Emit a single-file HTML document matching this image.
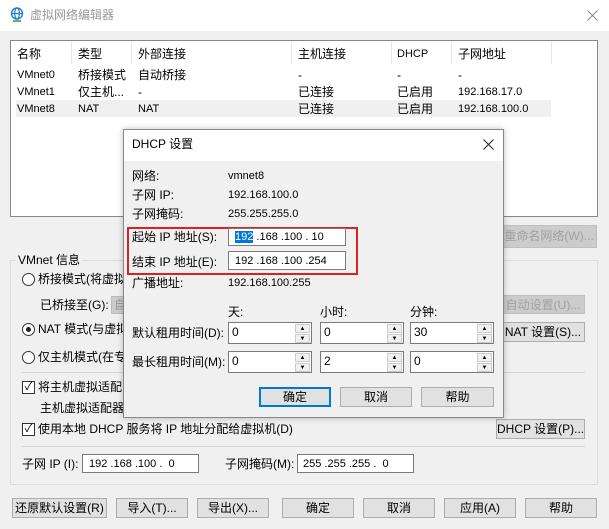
<!DOCTYPE html><html><head><meta charset="utf-8"><style>
*{margin:0;padding:0;box-sizing:border-box}
body{width:609px;height:529px;background:#f0f0f0;font-family:"Liberation Sans","Noto Sans CJK SC",sans-serif;font-size:12px;color:#000;position:relative;overflow:hidden}
.a{position:absolute;white-space:nowrap;line-height:14px}
.box{position:absolute;background:#fff;border:1px solid #7a7a7a}
.btn{position:absolute;background:#e1e1e1;border:1px solid #adadad;text-align:center;line-height:18px;white-space:nowrap}
.dis{color:#a0a0a0;background:#ccc;border-color:#bfbfbf}
.sep{position:absolute;height:1px;background:#d5d5d5}
.hs{position:absolute;top:2px;width:1px;height:22px;background:#e5e5e5}
.radio{position:absolute;width:13px;height:13px;border:1px solid #333;border-radius:50%;background:#fff}
.chk{position:absolute;width:13px;height:13px;border:1px solid #333;background:#fff;font-size:11px;line-height:11px;text-align:center}
.spin{position:absolute;background:#fff;border:1px solid #7a7a7a}
.spin .ar{position:absolute;right:1px;width:15px;height:9px;background:#f0f0f0;border:1px solid #ccc;font-size:6px;line-height:8px;text-align:center}
</style></head><body>
<div style="position:absolute;left:0;top:0;width:609px;height:31px;background:#fff"></div>
<svg class="a" style="left:10px;top:7px" width="14" height="15" viewBox="0 0 14 15"><circle cx="7" cy="6.5" r="5.5" fill="none" stroke="#1e7fd0" stroke-width="1.4"/><ellipse cx="7" cy="6.5" rx="2.3" ry="5.5" fill="none" stroke="#1e7fd0" stroke-width="1.2"/><line x1="1.5" y1="6.5" x2="12.5" y2="6.5" stroke="#1e7fd0" stroke-width="1.2"/><line x1="3" y1="14" x2="11" y2="14" stroke="#20a040" stroke-width="1.5"/></svg>
<div class="a" style="left:30px;top:8px;color:#999;font-size:12px">虚拟网络编辑器</div>
<svg class="a" style="left:587px;top:10px" width="11" height="11"><path d="M0.5 0.5L10.5 10.5M10.5 0.5L0.5 10.5" stroke="#888" stroke-width="1"/></svg>

<div class="box" style="left:10px;top:40px;width:588px;height:177px;border-color:#828790"></div>
<div class="hs" style="left:71px;top:42px"></div><div class="hs" style="left:131px;top:42px"></div><div class="hs" style="left:291px;top:42px"></div><div class="hs" style="left:391px;top:42px"></div><div class="hs" style="left:451px;top:42px"></div><div class="hs" style="left:551px;top:42px"></div>
<div class="a" style="left:17px;top:47px">名称</div><div class="a" style="left:78px;top:47px">类型</div><div class="a" style="left:138px;top:47px">外部连接</div><div class="a" style="left:298px;top:47px">主机连接</div><div class="a" style="left:397px;top:47px;font-size:11px">DHCP</div><div class="a" style="left:458px;top:47px">子网地址</div>
<div style="position:absolute;left:16px;top:100px;width:535px;height:17px;background:#f0f0f0"></div>
<div class="a" style="left:17px;top:68px;font-size:11px">VMnet0</div><div class="a" style="left:78px;top:68px">桥接模式</div><div class="a" style="left:138px;top:68px">自动桥接</div><div class="a" style="left:298px;top:68px">-</div><div class="a" style="left:397px;top:68px">-</div><div class="a" style="left:458px;top:68px">-</div>
<div class="a" style="left:17px;top:85px;font-size:11px">VMnet1</div><div class="a" style="left:78px;top:85px">仅主机...</div><div class="a" style="left:138px;top:85px">-</div><div class="a" style="left:298px;top:85px">已连接</div><div class="a" style="left:397px;top:85px">已启用</div><div class="a" style="left:458px;top:85px;font-size:11px">192.168.17.0</div>
<div class="a" style="left:17px;top:102px;font-size:11px">VMnet8</div><div class="a" style="left:78px;top:102px;font-size:11px">NAT</div><div class="a" style="left:138px;top:102px;font-size:11px">NAT</div><div class="a" style="left:298px;top:102px">已连接</div><div class="a" style="left:397px;top:102px">已启用</div><div class="a" style="left:458px;top:102px;font-size:11px">192.168.100.0</div>

<div class="btn dis" style="left:501px;top:225px;width:96px;height:23px;line-height:21px">重命名网络(W)...</div>

<div style="position:absolute;left:10px;top:260px;width:588px;height:225px;border:1px solid #dcdcdc"></div>
<div class="a" style="left:16px;top:253px;background:#f0f0f0;padding:0 2px">VMnet 信息</div>
<div class="radio" style="left:22px;top:273px"></div><div class="a" style="left:38px;top:272px">桥接模式(将虚拟</div>
<div class="a" style="left:40px;top:298px">已桥接至(G):</div>
<div style="position:absolute;left:111px;top:296px;width:20px;height:18px;background:#ccc;border:1px solid #bbb"></div><div class="a" style="left:114px;top:298px;color:#999">自</div>
<div class="btn dis" style="left:501px;top:295px;width:84px;height:19px">自动设置(U)...</div>
<div class="radio" style="left:22px;top:323px"></div><div style="position:absolute;left:26px;top:327px;width:5px;height:5px;border-radius:50%;background:#222"></div><div class="a" style="left:38px;top:322px">NAT 模式(与虚拟</div>
<div class="btn" style="left:501px;top:322px;width:84px;height:20px">NAT 设置(S)...</div>
<div class="radio" style="left:22px;top:351px"></div><div class="a" style="left:38px;top:350px">仅主机模式(在专</div>
<div class="sep" style="left:22px;top:372px;width:563px"></div>
<div class="chk" style="left:22px;top:381px">✓</div><div class="a" style="left:38px;top:380px">将主机虚拟适配</div>
<div class="a" style="left:40px;top:401px">主机虚拟适配器</div>
<div class="chk" style="left:22px;top:423px">✓</div><div class="a" style="left:38px;top:422px">使用本地 DHCP 服务将 IP 地址分配给虚拟机(D)</div>
<div class="btn" style="left:496px;top:419px;width:89px;height:20px">DHCP 设置(P)...</div>
<div class="sep" style="left:22px;top:446px;width:563px"></div>
<div class="a" style="left:22px;top:457px">子网 IP (I):</div>
<div class="box" style="left:82px;top:454px;width:117px;height:19px"></div><div class="a" style="left:89px;top:457px;font-size:11px">192 .168 .100 .&nbsp; 0</div>
<div class="a" style="left:225px;top:457px">子网掩码(M):</div>
<div class="box" style="left:297px;top:454px;width:117px;height:19px"></div><div class="a" style="left:303px;top:457px;font-size:11px">255 .255 .255 .&nbsp; 0</div>

<div class="btn" style="left:12px;top:498px;width:95px;height:20px">还原默认设置(R)</div>
<div class="btn" style="left:116px;top:498px;width:72px;height:20px">导入(T)...</div>
<div class="btn" style="left:197px;top:498px;width:72px;height:20px">导出(X)...</div>
<div class="btn" style="left:282px;top:498px;width:72px;height:20px">确定</div>
<div class="btn" style="left:363px;top:498px;width:72px;height:20px">取消</div>
<div class="btn" style="left:444px;top:498px;width:72px;height:20px">应用(A)</div>
<div class="btn" style="left:525px;top:498px;width:72px;height:20px">帮助</div>

<div style="position:absolute;left:123px;top:129px;width:381px;height:289px;background:#f0f0f0;border:1px solid #888;box-shadow:0 0 6px rgba(0,0,0,.25)"></div>
<div style="position:absolute;left:124px;top:130px;width:379px;height:31px;background:#fff"></div>
<div class="a" style="left:132px;top:137px">DHCP 设置</div>
<svg class="a" style="left:483px;top:139px" width="11" height="11"><path d="M0.5 0.5L10.5 10.5M10.5 0.5L0.5 10.5" stroke="#222" stroke-width="1"/></svg>
<div class="a" style="left:132px;top:169px">网络:</div><div class="a" style="left:228px;top:169px;font-size:11px">vmnet8</div>
<div class="a" style="left:132px;top:188px">子网 IP:</div><div class="a" style="left:228px;top:188px;font-size:11px">192.168.100.0</div>
<div class="a" style="left:132px;top:207px">子网掩码:</div><div class="a" style="left:228px;top:207px;font-size:11px">255.255.255.0</div>
<div style="position:absolute;left:127px;top:227px;width:231px;height:48px;border:2px solid #e02020"></div>
<div class="a" style="left:132px;top:230px">起始 IP 地址(S):</div>
<div class="box" style="left:228px;top:228px;width:118px;height:18px"></div><div class="a" style="left:235px;top:230px;font-size:11px"><span style="background:#0078d7;color:#fff">192</span> .168 .100 .&nbsp;10</div>
<div class="a" style="left:132px;top:255px">结束 IP 地址(E):</div>
<div class="box" style="left:228px;top:251px;width:118px;height:19px"></div><div class="a" style="left:235px;top:254px;font-size:11px">192 .168 .100 .254</div>
<div class="a" style="left:132px;top:276px">广播地址:</div><div class="a" style="left:228px;top:276px;font-size:11px">192.168.100.255</div>
<div class="a" style="left:228px;top:305px">天:</div><div class="a" style="left:320px;top:305px">小时:</div><div class="a" style="left:410px;top:305px">分钟:</div>
<div class="a" style="left:132px;top:326px">默认租用时间(D):</div>
<div class="a" style="left:132px;top:355px">最长租用时间(M):</div>
<div class="spin" style="left:228px;top:322px;width:84px;height:22px"><div class="a" style="left:3px;top:2px">0</div><div class="ar" style="top:1px">▲</div><div class="ar" style="top:11px">▼</div></div>
<div class="spin" style="left:320px;top:322px;width:84px;height:22px"><div class="a" style="left:3px;top:2px">0</div><div class="ar" style="top:1px">▲</div><div class="ar" style="top:11px">▼</div></div>
<div class="spin" style="left:410px;top:322px;width:84px;height:22px"><div class="a" style="left:3px;top:2px">30</div><div class="ar" style="top:1px">▲</div><div class="ar" style="top:11px">▼</div></div>
<div class="spin" style="left:228px;top:351px;width:84px;height:22px"><div class="a" style="left:3px;top:2px">0</div><div class="ar" style="top:1px">▲</div><div class="ar" style="top:11px">▼</div></div>
<div class="spin" style="left:320px;top:351px;width:84px;height:22px"><div class="a" style="left:3px;top:2px">2</div><div class="ar" style="top:1px">▲</div><div class="ar" style="top:11px">▼</div></div>
<div class="spin" style="left:410px;top:351px;width:84px;height:22px"><div class="a" style="left:3px;top:2px">0</div><div class="ar" style="top:1px">▲</div><div class="ar" style="top:11px">▼</div></div>
<div class="btn" style="left:259px;top:387px;width:72px;height:20px;border:2px solid #0078d7;line-height:16px">确定</div>
<div class="btn" style="left:340px;top:387px;width:72px;height:20px">取消</div>
<div class="btn" style="left:421px;top:387px;width:73px;height:20px">帮助</div>
</body></html>
